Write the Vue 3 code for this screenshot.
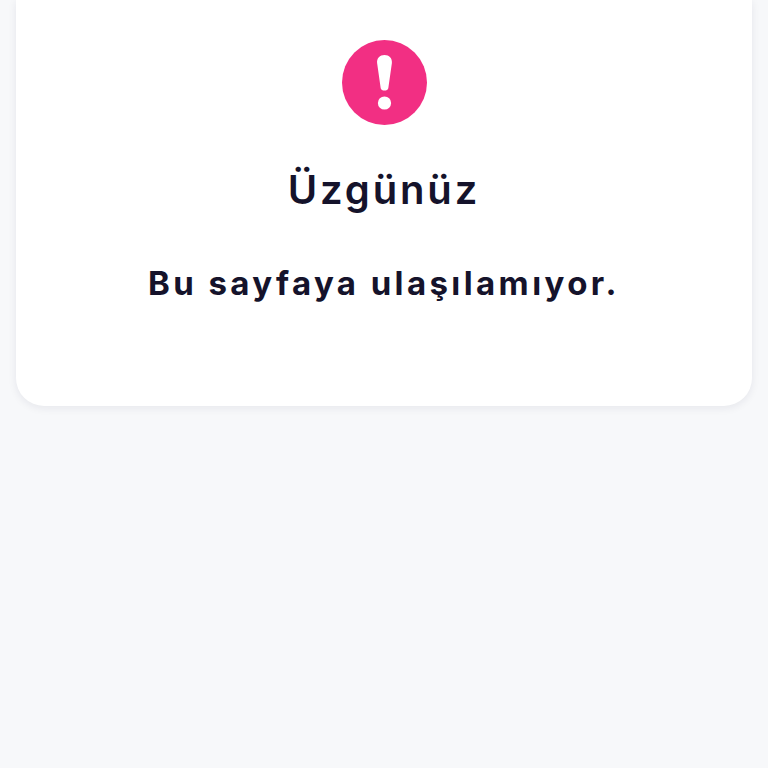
<script setup>
const title = 'Üzgünüz'
const message = 'Bu sayfaya ulaşılamıyor.'
</script>

<template>
  <div class="page">
    <div class="card">
      <svg class="alert-icon" viewBox="0 0 85 85" aria-hidden="true">
        <circle cx="42.5" cy="42.5" r="42.5" fill="#f22f83" />
        <path d="M42.5 15c-4.7 0-7.8 3.2-7.4 8l3.6 25.2c.3 1.6 1.9 2.3 3.8 2.3s3.5-.7 3.8-2.3l3.6-25.2c.4-4.8-2.7-8-7.4-8z" fill="#fff" />
        <circle cx="42.5" cy="63" r="6.6" fill="#fff" />
      </svg>
      <h1 class="title">{{ title }}</h1>
      <p class="message">{{ message }}</p>
    </div>
  </div>
</template>

<style>
html, body {
  margin: 0;
  background: #f7f8fa;
}
</style>

<style scoped>
.page {
  min-height: 768px;
  padding: 0 16px;
  box-sizing: border-box;
  background: #f7f8fa;
  font-family: Inter, "Noto Sans", sans-serif;
}

.card {
  height: 406px;
  box-sizing: border-box;
  padding-top: 40px;
  background: #fff;
  border-radius: 0 0 28px 28px;
  box-shadow: 0 2px 8px rgba(30, 30, 60, 0.08);
  display: flex;
  flex-direction: column;
  align-items: center;
  color: #15132b;
}

.alert-icon {
  width: 85px;
  height: 85px;
  flex-shrink: 0;
}

.title {
  margin: 40px 0 0;
  font-size: 40px;
  line-height: 50px;
  font-weight: 600;
  letter-spacing: 2.85px;
}

.message {
  margin: 47px 0 0;
  font-size: 33px;
  line-height: 42px;
  font-weight: 700;
  letter-spacing: 3.4px;
}
</style>
